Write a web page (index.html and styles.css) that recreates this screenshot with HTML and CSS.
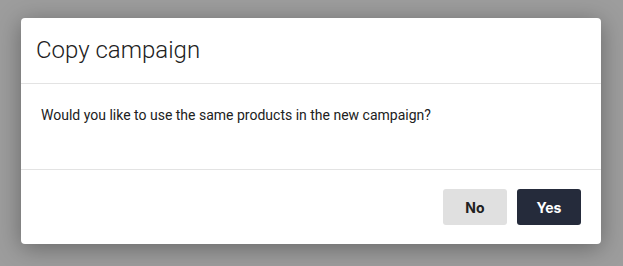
FILE: index.html
```html
<!DOCTYPE html>
<html>
<head>
<meta charset="utf-8">
<link rel="stylesheet" href="styles.css">
</head>
<body>
<div class="modal">
  <div class="modal-header"><h2 class="modal-title">Copy campaign</h2></div>
  <div class="modal-body"><p class="modal-text">Would you like to use the same products in the new campaign?</p></div>
  <div class="modal-footer">
    <button class="btn btn-secondary">No</button>
    <button class="btn btn-primary">Yes</button>
  </div>
</div>
</body>
</html>
```
FILE: styles.css
```css
html, body { margin: 0; padding: 0; }
body {
  background: #9d9d9d;
  width: 623px;
  height: 266px;
  overflow: hidden;
  font-family: Roboto, "Liberation Sans", sans-serif;
  padding-top: 18px;
  box-sizing: border-box;
}
.modal {
  margin-left: 21px;
  width: 580px;
  height: 226px;
  background: #fff;
  border-radius: 4px;
  box-shadow: 0 4px 24px rgba(0,0,0,0.35);
  display: flex;
  flex-direction: column;
}
.modal-header {
  height: 65px;
  border-bottom: 1px solid #e3e3e3;
  display: flex;
  align-items: center;
  padding-left: 15px;
}
.modal-title {
  margin: 0;
  font-size: 24px;
  font-weight: 300;
  color: #212121;
  position: relative;
  top: -1px;
}
.modal-body {
  height: 85px;
  border-bottom: 1px solid #e3e3e3;
  padding: 0 20px;
  display: flex;
  align-items: center;
}
.modal-text {
  margin: 0;
  font-size: 14px;
  color: #212121;
  position: relative;
  top: -12px;
}
.modal-footer {
  flex: 1;
  display: flex;
  justify-content: flex-end;
  align-items: flex-start;
  gap: 10px;
  padding: 19px 20px 0 0;
}
.btn {
  width: 64px;
  height: 36px;
  border: none;
  border-radius: 3px;
  font-family: Inter, Roboto, sans-serif;
  font-size: 14px;
  font-weight: 700;
  cursor: pointer;
}
.btn-secondary { background: #e0e0e0; color: #212121; }
.btn-primary { background: #252b3b; color: #fff; }
```
